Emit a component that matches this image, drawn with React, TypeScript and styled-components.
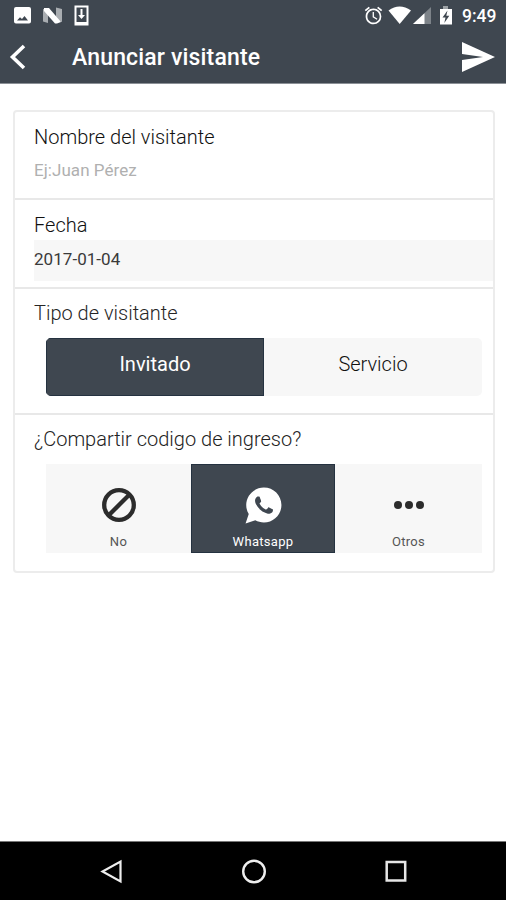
import React from "react";
import styled, { createGlobalStyle } from "styled-components";
import { IoLogoWhatsapp } from "react-icons/io";
import { MdAlarm } from "react-icons/md";

const GlobalStyle = createGlobalStyle`
  * { box-sizing: border-box; }
  body { margin: 0; background: #fff; font-family: Roboto, "Liberation Sans", sans-serif; }
  button, input { font: inherit; border: 0; padding: 0; margin: 0; background: none; outline: none; }
  svg { display: block; flex: none; }
`;

const slate = "#3f4750";

const Screen = styled.div`
  display: flex;
  flex-direction: column;
  height: 900px;
  width: 506px;
  background: #fff;
  overflow: hidden;
`;

const Header = styled.header`
  height: 84px;
  flex: none;
  background: ${slate};
  border-bottom: 1px solid #8b9096;
  color: #fff;
`;

const StatusBar = styled.div`
  height: 30px;
  display: flex;
  justify-content: space-between;
  padding: 0 9px 0 13px;
`;

const StatusGroup = styled.div`
  display: flex;
  align-items: flex-start;
`;

const AlarmIcon = styled(MdAlarm)`
  margin: 5px -1px 0 0;
`;

const Clock = styled.span`
  font-size: 17.5px;
  font-weight: 500;
  line-height: 20px;
  width: 35px;
  margin: 6px 0 0 8px;
  white-space: nowrap;
`;

const AppBar = styled.div`
  height: 53px;
  display: flex;
  align-items: center;
  padding: 0 10px 0 9px;
`;

const IconButton = styled.button`
  color: #fff;
`;

const Title = styled.h1`
  flex: 1;
  margin: 2px 0 0 46px;
  font-size: 23px;
  font-weight: 500;
  line-height: 28px;
  letter-spacing: 0.16px;
`;

const Content = styled.main`
  flex: 1;
  padding: 26px 11px 0 13px;
`;

const Card = styled.section`
  border: 2px solid #ececec;
  border-radius: 4px;
  height: 463px;
`;

const Section = styled.div<{ $height: number; $top?: number; $last?: boolean }>`
  height: ${(p) => p.$height}px;
  padding: ${(p) => p.$top ?? 12}px 0 0 19px;
  border-bottom: ${(p) => (p.$last ? "0" : "2px solid #e8e8e8")};
`;

const Label = styled.div<{ $tone?: string }>`
  font-size: 20px;
  font-weight: 300;
  line-height: 26px;
  color: ${(p) => p.$tone ?? "#111"};
`;

const Field = styled.input<{ $filled?: boolean }>`
  display: block;
  width: 100%;
  height: 41px;
  margin-top: ${(p) => (p.$filled ? 2 : 0)}px;
  padding-bottom: ${(p) => (p.$filled ? 4 : 1)}px;
  font-size: 17px;
  letter-spacing: 0.05px;
  color: #3a3a3a;
  background: ${(p) => (p.$filled ? "#f7f7f7" : "transparent")};
  &::placeholder { color: #b0b0b0; opacity: 1; }
`;

const Segments = styled.div<{ $height: number; $radius?: number }>`
  display: flex;
  height: ${(p) => p.$height}px;
  margin: 12px 11px 0 12px;
  border-radius: ${(p) => p.$radius ?? 0}px;
  overflow: hidden;
  background: #f7f7f7;
`;

const Segment = styled.button<{ $active?: boolean }>`
  flex: 1;
  font-size: 20px;
  font-weight: ${(p) => (p.$active ? 400 : 300)};
  padding-bottom: 6px;
  color: ${(p) => (p.$active ? "#fff" : "#111")};
  background: ${(p) => (p.$active ? slate : "transparent")};
  box-shadow: ${(p) => (p.$active ? "inset 0 0 0 1px #253240" : "none")};
`;

const ShareSegments = styled(Segments)`
  display: grid;
  grid-template-columns: 145px 144px 1fr;
`;

const ShareOption = styled(Segment)`
  display: flex;
  flex-direction: column;
  align-items: center;
  font-size: 13px;
  line-height: 16px;
  letter-spacing: 0.3px;
  padding: 20px 0 0;
  font-weight: 400;
  color: ${(p) => (p.$active ? "#fff" : "#555")};
`;

const OptionIcon = styled.span<{ $dark?: boolean }>`
  display: flex;
  align-items: center;
  justify-content: center;
  height: 42px;
  margin-bottom: 8px;
  color: ${(p) => (p.$dark ? "#2c2c2c" : "#fff")};
`;

const NavBar = styled.nav`
  height: 59px;
  flex: none;
  background: #000;
  border-top: 1px solid #777;
  display: flex;
  justify-content: space-between;
  padding: 17px 98px 0 99px;
`;

function StatusIcons() {
  return (
    <StatusGroup>
      <svg width="80" height="30" viewBox="13 0 80 30">
        <path fill="#fff" fillRule="evenodd" d="M16 7h13a2 2 0 0 1 2 2v12.500a2 2 0 0 1-2 2H16a2 2 0 0 1-2-2V9a2 2 0 0 1 2-2zM17 20.500h11l-3.500-4.500-2.500 3-2-1.800z" />
        <path fill="#a9adb1" d="M43 9l5 1v13l-5-1.500zM56 7.500l6 1.500v13l-6-2z" />
        <path fill="#fff" d="M44 8h5l12 14-4 1.500h-2L44 11z" />
        <path fill="none" stroke="#fff" strokeWidth="2" d="M75.500 6.500h12v18h-12z" />
        <path fill="#fff" d="M75 22h13v3H75zM80.500 9h2v6h2.500L81.500 19 78 15h2.500z" />
      </svg>
    </StatusGroup>
  );
}

function PhoneState() {
  return (
    <StatusGroup>
      <AlarmIcon size={21} />
      <svg width="71" height="30" viewBox="385 0 71 30">
        <path fill="#fff" d="M390.500 10.500Q401.500 2.500 413 10.500L401.700 24z" />
        <path fill="#7d8389" d="M433 7v17h-18z" />
        <path fill="#fff" d="M426.500 13.200V24H415z" />
        <path fill="#9da2a6" d="M445 6h5v3h-5z" />
        <path fill="#fff" fillRule="evenodd" d="M442 9h12v15.500h-12zM449.500 10.500l-5 7h3l-1.200 5.500 5-7.200h-3z" />
      </svg>
      <Clock>9:49</Clock>
    </StatusGroup>
  );
}

export default function App() {
  return (
    <>
      <GlobalStyle />
      <Screen>
        <Header>
          <StatusBar>
            <StatusIcons />
            <PhoneState />
          </StatusBar>
          <AppBar>
            <IconButton aria-label="Volver">
              <svg width="17" height="26" viewBox="0 0 17 26">
                <path d="M15 2L3.500 13 15 24" fill="none" stroke="#fff" strokeWidth="3.600" />
              </svg>
            </IconButton>
            <Title>Anunciar visitante</Title>
            <IconButton aria-label="Enviar">
              <svg width="35" height="32" viewBox="0 0 35 32">
                <path d="M1 1L34 16 1 31V19L22 16 1 13z" fill="#fff" />
              </svg>
            </IconButton>
          </AppBar>
        </Header>
        <Content>
          <Card>
            <Section $height={88}>
              <Label>Nombre del visitante</Label>
              <Field placeholder="Ej:Juan Pérez" />
            </Section>
            <Section $height={89}>
              <Label>Fecha</Label>
              <Field $filled defaultValue="2017-01-04" />
            </Section>
            <Section $height={126} $top={11}>
              <Label $tone="#262626">Tipo de visitante</Label>
              <Segments $height={58} $radius={5}>
                <Segment $active>Invitado</Segment>
                <Segment>Servicio</Segment>
              </Segments>
            </Section>
            <Section $height={156} $top={11} $last>
              <Label $tone="#222">¿Compartir codigo de ingreso?</Label>
              <ShareSegments $height={89}>
                <ShareOption>
                  <OptionIcon $dark>
                    <svg width="36" height="36" viewBox="0 0 36 36" fill="none" stroke="currentColor" strokeWidth="4.300">
                      <circle cx="18" cy="18" r="14.800" />
                      <path d="M7.500 28.500L28.500 7.500" />
                    </svg>
                  </OptionIcon>
                  No
                </ShareOption>
                <ShareOption $active>
                  <OptionIcon>
                    <IoLogoWhatsapp size={41} />
                  </OptionIcon>
                  Whatsapp
                </ShareOption>
                <ShareOption>
                  <OptionIcon $dark>
                    <svg width="32" height="10" viewBox="0 0 32 10" fill="currentColor">
                      <circle cx="5" cy="5" r="4" />
                      <circle cx="16" cy="5" r="4" />
                      <circle cx="27" cy="5" r="4" />
                    </svg>
                  </OptionIcon>
                  Otros
                </ShareOption>
              </ShareSegments>
            </Section>
          </Card>
        </Content>
        <NavBar>
          <svg width="24" height="26" viewBox="0 0 24 26" fill="none" stroke="#eee" strokeWidth="2.200">
            <path d="M21.500 2.500v20L3.500 12.500z" />
          </svg>
          <svg width="26" height="26" viewBox="0 0 26 26" fill="none" stroke="#eee" strokeWidth="2.400">
            <circle cx="13" cy="12.500" r="10.800" />
          </svg>
          <svg width="24" height="26" viewBox="0 0 24 26" fill="none" stroke="#e6e6e6" strokeWidth="2.500">
            <path d="M2.700 3h18.500v18.500H2.700z" />
          </svg>
        </NavBar>
      </Screen>
    </>
  );
}
